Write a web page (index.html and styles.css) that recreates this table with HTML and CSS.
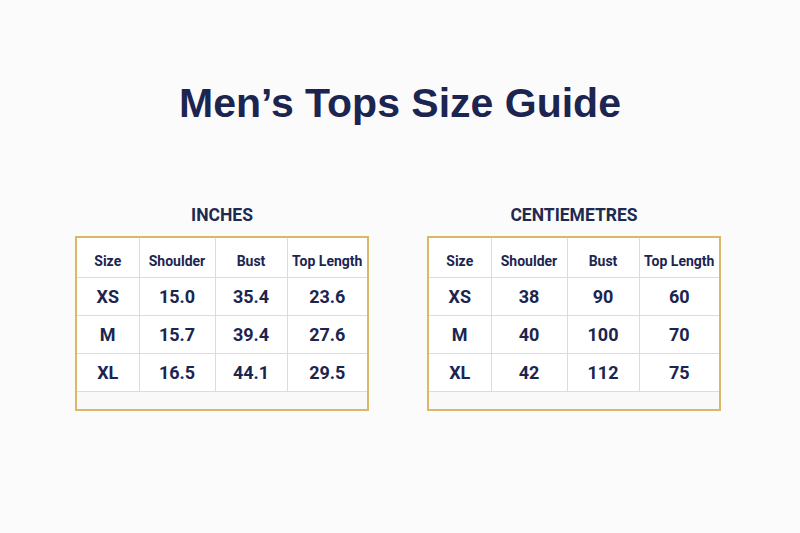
FILE: index.html
```html
<!DOCTYPE html>
<html lang="en">
<head>
<meta charset="utf-8">
<title>Men's Tops Size Guide</title>
<link rel="stylesheet" href="styles.css">
</head>
<body>
<main class="page">
  <h1 class="title">Men’s Tops Size Guide</h1>
  <div class="charts">
    <section class="chart">
      <h2 class="chart-title">INCHES</h2>
      <table class="size-table">
        <colgroup><col class="c1"><col class="c2"><col class="c3"><col class="c4"></colgroup>
        <thead>
          <tr><th>Size</th><th>Shoulder</th><th>Bust</th><th>Top Length</th></tr>
        </thead>
        <tbody>
          <tr><td>XS</td><td>15.0</td><td>35.4</td><td>23.6</td></tr>
          <tr><td>M</td><td>15.7</td><td>39.4</td><td>27.6</td></tr>
          <tr><td>XL</td><td>16.5</td><td>44.1</td><td>29.5</td></tr>
          <tr class="empty"><td colspan="4"></td></tr>
        </tbody>
      </table>
    </section>
    <section class="chart">
      <h2 class="chart-title">CENTIEMETRES</h2>
      <table class="size-table">
        <colgroup><col class="c1"><col class="c2"><col class="c3"><col class="c4"></colgroup>
        <thead>
          <tr><th>Size</th><th>Shoulder</th><th>Bust</th><th>Top Length</th></tr>
        </thead>
        <tbody>
          <tr><td>XS</td><td>38</td><td>90</td><td>60</td></tr>
          <tr><td>M</td><td>40</td><td>100</td><td>70</td></tr>
          <tr><td>XL</td><td>42</td><td>112</td><td>75</td></tr>
          <tr class="empty"><td colspan="4"></td></tr>
        </tbody>
      </table>
    </section>
  </div>
</main>
</body>
</html>
```

FILE: styles.css
```css
html, body {
  margin: 0;
  padding: 0;
  background: #fbfbfc;
}

.page {
  width: 800px;
  height: 533px;
  box-sizing: border-box;
  padding-top: 83px;
  font-family: "Liberation Sans", Arial, sans-serif;
  color: #1c2550;
}

.title {
  margin: 0;
  text-align: center;
  font-size: 41px;
  line-height: 41px;
  font-weight: 700;
  letter-spacing: 0;
}

.charts {
  display: flex;
  gap: 60px;
  padding-left: 76px;
  margin-top: 81px;
}

.chart {
  width: 292px;
  display: flex;
  flex-direction: column;
  align-items: center;
}

.chart-title {
  margin: 0 0 11px;
  font-family: Roboto, "Liberation Sans", sans-serif;
  font-size: 17.5px;
  line-height: 20px;
  font-weight: 700;
  color: #1f2a4f;
}

.size-table {
  width: 292px;
  border-collapse: collapse;
  table-layout: fixed;
  background: #ffffff;
  border: 2px solid #dcb76a;
  font-family: Roboto, "Liberation Sans", sans-serif;
  color: #1c2550;
}

.c1 { width: 63px; }
.c2 { width: 76px; }
.c3 { width: 72px; }
.c4 { width: 81px; }

.size-table th,
.size-table td {
  border: 1px solid #dcdce0;
  text-align: center;
  padding: 0;
  font-weight: 700;
  white-space: nowrap;
}

.size-table th {
  height: 33px;
  padding-top: 6px;
  font-size: 14px;
  border-top: none;
}

.size-table td {
  height: 37px;
  font-size: 18px;
}

.size-table th:first-child,
.size-table td:first-child {
  border-left: none;
}

.size-table th:last-child,
.size-table td:last-child {
  border-right: none;
}

.size-table .empty td {
  height: 17px;
  background: #f9f9fa;
  border-bottom: none;
}
```
